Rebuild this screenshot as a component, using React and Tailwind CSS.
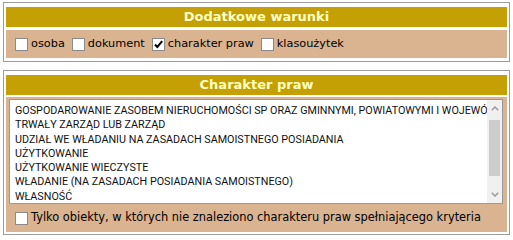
import { useState } from 'react'

const FONT = { fontFamily: '"DejaVu Sans", Verdana, sans-serif' }
const LIST_FONT = { fontFamily: 'Roboto, Tahoma, sans-serif' }

const RIGHTS = [
  'GOSPODAROWANIE ZASOBEM NIERUCHOMOŚCI SP ORAZ GMINNYMI, POWIATOWYMI I WOJEWÓDZKIMI',
  'TRWAŁY ZARZĄD LUB ZARZĄD',
  'UDZIAŁ WE WŁADANIU NA ZASADACH SAMOISTNEGO POSIADANIA',
  'UŻYTKOWANIE',
  'UŻYTKOWANIE WIECZYSTE',
  'WŁADANIE (NA ZASADACH POSIADANIA SAMOISTNEGO)',
  'WŁASNOŚĆ',
  'WSPÓŁWŁASNOŚĆ, WSPÓLNOTA',
]

function Box({ checked, onClick }) {
  return (
    <span
      onClick={onClick}
      className="flex h-[13px] w-[13px] shrink-0 items-center justify-center border border-[#8a8a8a] bg-white"
    >
      {checked && (
        <svg width="11" height="11" viewBox="0 0 11 11">
          <path d="M2 5.5 L4.3 8 L9.2 2.2" fill="none" stroke="#000" strokeWidth="2" />
        </svg>
      )}
    </span>
  )
}

function Check({ label, checked, onToggle }) {
  return (
    <label className="mr-[7px] flex cursor-default items-center gap-[3px]">
      <Box checked={checked} onClick={onToggle} />
      <span>{label}</span>
    </label>
  )
}

function Chevron({ up }) {
  return (
    <svg width="8" height="5" viewBox="0 0 8 5">
      <path
        d={up ? 'M0.8 4.2 L4 1 L7.2 4.2' : 'M0.8 0.8 L4 4 L7.2 0.8'}
        fill="none"
        stroke="#9a9a9a"
        strokeWidth="1.5"
      />
    </svg>
  )
}

export default function App() {
  const [filters, setFilters] = useState({ osoba: false, dokument: false, charakter: true, klasouzytek: false })
  const [onlyMissing, setOnlyMissing] = useState(false)
  const toggle = (k) => setFilters((f) => ({ ...f, [k]: !f[k] }))

  return (
    <div className="h-[235px] w-[513px] overflow-hidden bg-white pl-[3px] pt-[2px] text-[11.3px] text-black" style={FONT}>
      <div className="flex w-[507px] flex-col gap-[3px] border border-[#9c9c9c] px-[2px] pb-[3px] pt-[4px]">
        <div className="flex h-[20px] items-center justify-center bg-[#c4a004] text-[13px] font-bold text-[#ffffc4]">
          Dodatkowe warunki
        </div>
        <div className="flex h-[28px] items-center bg-[#dab391] pl-[9px]">
          <Check label="osoba" checked={filters.osoba} onToggle={() => toggle('osoba')} />
          <Check label="dokument" checked={filters.dokument} onToggle={() => toggle('dokument')} />
          <Check label="charakter praw" checked={filters.charakter} onToggle={() => toggle('charakter')} />
          <Check label="klasoużytek" checked={filters.klasouzytek} onToggle={() => toggle('klasouzytek')} />
        </div>
      </div>

      <div className="mt-[8px] flex h-[165px] w-[507px] flex-col gap-[2px] border border-[#9c9c9c] px-[2px] pb-[2px] pt-[4px]">
        <div className="flex h-[20px] shrink-0 items-center justify-center bg-[#c4a004] text-[13px] font-bold text-[#ffffc4]">
          Charakter praw
        </div>
        <div className="flex flex-1 flex-col bg-[#dab391] pl-[3px] pt-[2px]">
          <div className="flex h-[105px] w-[494px] border border-[#9a9a9a] bg-white">
            <div className="flex-1 overflow-hidden pl-[5px] pt-[4px] text-[10.75px] text-[#111]" style={LIST_FONT}>
              {RIGHTS.map((r) => (
                <div key={r} className="whitespace-nowrap leading-[14.3px]">
                  {r}
                </div>
              ))}
            </div>
            <div className="flex w-[15px] flex-col bg-[#f0f0f0]">
              <div className="flex h-[17px] items-center justify-center">
                <Chevron up />
              </div>
              <div className="flex-1 px-[2px] pt-[3px]">
                <div className="h-[56px] bg-[#cdcdcd]" />
              </div>
              <div className="flex h-[17px] items-center justify-center">
                <Chevron />
              </div>
            </div>
          </div>
          <label className="flex flex-1 items-center gap-[3px] pl-[6px]">
            <Box checked={onlyMissing} onClick={() => setOnlyMissing(!onlyMissing)} />
            <span className="text-[11.4px]">Tylko obiekty, w których nie znaleziono charakteru praw spełniającego kryteria</span>
          </label>
        </div>
      </div>
    </div>
  )
}
